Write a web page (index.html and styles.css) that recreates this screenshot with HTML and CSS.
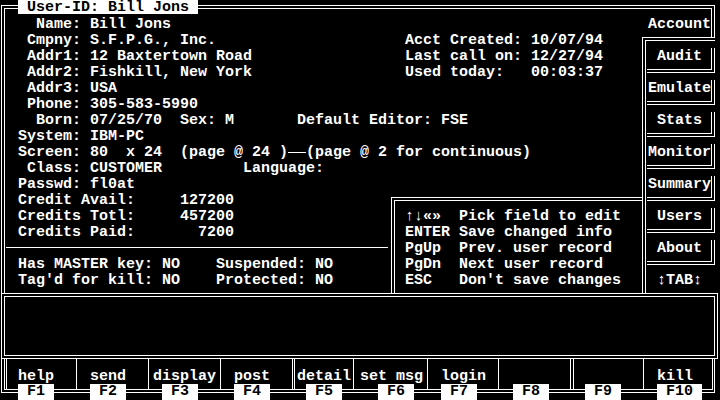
FILE: index.html
```
<!DOCTYPE html>
<html lang="en">
<head>
<meta charset="utf-8">
<title>User-ID: Bill Jons</title>
<link rel="stylesheet" href="styles.css">
</head>
<body>
<div class="screen">
  <div class="top">
    <div class="main">
      <div class="title"> User-ID: Bill Jons </div>
      <div class="upper">
        <div class="info">
          <div class="row">  Name: Bill Jons</div>
          <div class="row"> Cmpny: S.F.P.G., Inc.</div>
          <div class="row"> Addr1: 12 Baxtertown Road</div>
          <div class="row"> Addr2: Fishkill, New York</div>
          <div class="row"> Addr3: USA</div>
          <div class="row"> Phone: 305-583-5990</div>
          <div class="row">  Born: 07/25/70  Sex: M       Default Editor: FSE</div>
          <div class="row">System: IBM-PC</div>
          <div class="row">Screen: 80  x 24  (page @ 24 )<span class="dash"></span>(page @ 2 for continuous)</div>
          <div class="row"> Class: CUSTOMER         Language:</div>
          <div class="row">Passwd: fl0at</div>
        </div>
        <div class="dates">
          <div class="row">Acct Created: 10/07/94</div>
          <div class="row">Last call on: 12/27/94</div>
          <div class="row">Used today:   00:03:37</div>
        </div>
      </div>
      <div class="lower">
        <div class="lowleft">
          <div class="credits">
            <div class="row">Credit Avail:     127200</div>
            <div class="row">Credits Totl:     457200</div>
            <div class="row">Credits Paid:       7200</div>
          </div>
          <div class="sep"></div>
          <div class="flags">
            <div class="row">Has MASTER key: NO    Suspended: NO</div>
            <div class="row">Tag'd for kill: NO    Protected: NO</div>
          </div>
        </div>
        <div class="help">
          <div class="row">↑↓«»  Pick field to edit</div>
          <div class="row">ENTER Save changed info</div>
          <div class="row">PgUp  Prev. user record</div>
          <div class="row">PgDn  Next user record</div>
          <div class="row">ESC   Don't save changes</div>
        </div>
      </div>
    </div>
    <div class="tabs">
      <div class="acct">Account</div>
      <div class="tablist">
        <div class="tab"> Audit</div>
        <div class="tab">Emulate</div>
        <div class="tab"> Stats</div>
        <div class="tab">Monitor</div>
        <div class="tab">Summary</div>
        <div class="tab"> Users</div>
        <div class="tab"> About</div>
        <div class="tabkey"> ↕TAB↕</div>
      </div>
    </div>
  </div>
  <div class="msg"></div>
  <div class="fbar">
    <div class="fcell"><div class="flbl">help</div><div class="fkey"> F1 </div></div>
    <div class="fcell"><div class="flbl">send</div><div class="fkey"> F2 </div></div>
    <div class="fcell"><div class="flbl">display</div><div class="fkey"> F3 </div></div>
    <div class="fcell"><div class="flbl">post</div><div class="fkey"> F4 </div></div>
    <div class="fcell"><div class="flbl">detail</div><div class="fkey"> F5 </div></div>
    <div class="fcell"><div class="flbl">set msg</div><div class="fkey"> F6 </div></div>
    <div class="fcell"><div class="flbl">login</div><div class="fkey"> F7 </div></div>
    <div class="fcell"><div class="flbl"></div><div class="fkey"> F8 </div></div>
    <div class="fcell"><div class="flbl"></div><div class="fkey"> F9 </div></div>
    <div class="fcell"><div class="flbl">kill</div><div class="fkey"> F10 </div></div>
  </div>
</div>
</body>
</html>
```
FILE: styles.css
```
* { box-sizing: border-box; }
html, body { margin: 0; padding: 0; background: #000; overflow: hidden; }
.screen {
  width: 720px; height: 400px; background: #000; color: #fff;
  font-family: "Liberation Mono", "DejaVu Sans Mono", monospace;
  font-size: 15px; font-weight: bold; line-height: 16px;
  padding: 5px 0 0 1px;
  display: flex; flex-direction: column;
}
.row { height: 16px; white-space: pre; }
.top { display: flex; height: 288px; width: 714px; flex-shrink: 0; }
.main {
  width: 641px; flex-shrink: 0;
  border-top: 4px double #fff; border-left: 4px double #fff;
  display: flex; flex-direction: column;
}
.title {
  align-self: flex-start; margin: -9px 0 0 13px; height: 14px;
  background: #fff; color: #000; white-space: pre;
}
.upper { display: flex; height: 176px; margin-top: 2px; flex-shrink: 0; }
.info { width: 400px; flex-shrink: 0; padding: 1px 0 0 13px; }
.dates { padding-top: 17px; }
.dash {
  display: inline-block; width: 18px; height: 8px;
  border-bottom: 1px solid #fff; vertical-align: top;
}
.lower { flex: 1; display: flex; }
.lowleft { width: 386px; flex-shrink: 0; }
.credits, .flags { padding: 1px 0 0 13px; }
.sep { width: 382px; height: 1px; background: #fff; margin: 6px 0 8px 1px; }
.help {
  flex: 1; margin-top: 5px;
  border-top: 4px double #fff; border-left: 4px double #fff;
  padding: 8px 0 0 10px;
}
.tabs { width: 73px; display: flex; flex-direction: column; }
.acct {
  height: 32px; flex-shrink: 0;
  border-top: 4px double #fff; border-right: 4px double #fff;
  padding: 8px 0 0 6px; white-space: pre;
}
.tablist {
  flex: 1; border-top: 4px double #fff; border-left: 4px double #fff;
  padding-top: 7px;
}
.tab {
  height: 25px; margin: 0 0 7px 1px;
  border-right: 4px double #fff; border-bottom: 4px double #fff;
  padding: 1px 0 0 1px; white-space: pre;
}
.tabkey { padding: 1px 0 0 2px; white-space: pre; }
.msg { width: 717px; height: 66px; flex-shrink: 0; border: 4px double #fff; }
.fbar {
  width: 714px; height: 34px; flex-shrink: 0;
  border-left: 4px double #fff; border-right: 3px double #fff; border-bottom: 4px double #fff;
  padding-left: 1px;
  display: grid;
  grid-template-columns: 70px 72px 72px 72px 61px 74px 71px 72px 73px 69px;
  grid-template-rows: 30px;
}
.fcell { border-left: 1px solid #fff; padding: 9px 0 0 13px; min-width: 0; }
.fcell:nth-child(1) { padding-left: 11px; }
.fcell:nth-child(3) .flbl { margin-left: -9px; }
.fcell:nth-child(5) { border-left: 3px double #fff; padding-left: 11px; }
.fcell:nth-child(5) .flbl { margin-left: -9px; }
.fcell:nth-child(6) { padding-left: 24px; }
.fcell:nth-child(6) .flbl { margin-left: -18px; }
.fcell:nth-child(8) { padding-left: 14px; }
.fcell:nth-child(9) { border-left: 4px double #fff; padding-left: 11px; }
.flbl { height: 16px; padding-top: 1px; white-space: pre; }
.fkey { width: max-content; height: 16px; background: #fff; color: #000; white-space: pre; }
```
